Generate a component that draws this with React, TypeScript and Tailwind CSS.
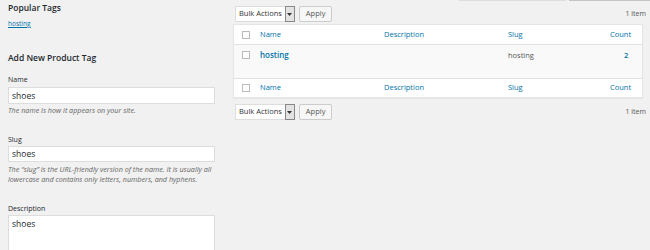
import React from 'react'

const font = { fontFamily: '"Open Sans", "Noto Sans", sans-serif' }

function BulkBar() {
  return (
    <div className="flex items-center justify-between h-[16px]">
      <div className="flex items-center gap-[4px] pl-[2px]">
        <div className="flex items-center h-[16px] bg-white border border-[#ddd] pl-[3px] text-[7.5px] text-[#333]">
          <span className="pr-[3px]">Bulk Actions</span>
          <span className="flex items-center justify-center w-[10px] h-[16px] border border-[#888] bg-[#e3e3e3] -mr-px">
            <svg width="5" height="3" viewBox="0 0 5 3">
              <path d="M0 0h5L2.5 3z" fill="#333" />
            </svg>
          </span>
        </div>
        <button className="h-[16px] px-[6px] border border-[#ccc] bg-[#f7f7f7] rounded-[2px] text-[7.5px] text-[#555] leading-none">
          Apply
        </button>
      </div>
      <span className="text-[7px] text-[#555] -mr-[3px]">1 item</span>
    </div>
  )
}

function Checkbox() {
  return <span className="block w-[8px] h-[8px] border border-[#bbb] bg-[#fdfdfd]" />
}

function HeadRow({ top }: { top?: boolean }) {
  return (
    <div
      className={`grid grid-cols-[26px_124px_124px_102px_1fr] items-center text-[7.5px] text-[#0073aa] bg-white ${
        top ? 'h-[20px] border-b border-[#e1e1e1]' : 'h-[19px] border-t border-[#e1e1e1]'
      }`}
    >
      <div className="pl-[8px]">
        <Checkbox />
      </div>
      <span>Name</span>
      <span>Description</span>
      <span>Slug</span>
      <span>Count</span>
    </div>
  )
}

export default function App() {
  return (
    <div className="w-[650px] h-[250px] overflow-hidden bg-[#f1f1f1] text-[#23282d]" style={font}>
      <div className="flex justify-end h-px">
        <div className="w-[107px] bg-[#ddd]" />
        <div className="w-[3px]" />
        <div className="w-[81px] bg-[#c4c4c4]" />
      </div>
      <div className="flex">
        {/* left column */}
        <div className="w-[225px] shrink-0 pl-[8px] pr-[10px]">
          <h2 className="text-[8.5px] font-semibold leading-[14px]">Popular Tags</h2>
          <a className="block mt-[4px] text-[6.5px] text-[#0073aa] underline leading-[10px]">hosting</a>
          <h2 className="text-[8.5px] font-semibold mt-[22px] leading-[14px]">Add New Product Tag</h2>

          <label className="block mt-[10px] text-[7px] leading-[10px]">Name</label>
          <div className="mt-[2px] h-[17px] bg-white border border-[#ddd] pl-[3px] text-[8.5px] leading-[15px]">shoes</div>
          <p className="mt-px text-[7.2px] italic text-[#666] leading-[10px] whitespace-nowrap">
            The name is how it appears on your site.
          </p>

          <label className="block mt-[20px] text-[7px] leading-[10px]">Slug</label>
          <div className="mt-px h-[16px] bg-white border border-[#ddd] pl-[3px] text-[8.5px] leading-[14px]">shoes</div>
          <p className="mt-[2px] text-[7.2px] italic text-[#666] leading-[10px] whitespace-nowrap">
            The “slug” is the URL-friendly version of the name. It is usually all
            <br />
            lowercase and contains only letters, numbers, and hyphens.
          </p>

          <label className="block mt-[20px] text-[7px] leading-[10px]">Description</label>
          <div className="mt-px h-[60px] bg-white border border-[#ddd] pl-[3px] pt-[2px] text-[8.5px] leading-[12px]">
            shoes
          </div>
        </div>

        {/* right column */}
        <div className="flex-1 pl-[8px] pr-[7px] pt-[5px]">
          <BulkBar />
          <div className="mt-[2px] border border-[#e5e5e5] shadow-[0_1px_1px_rgba(0,0,0,0.04)]">
            <HeadRow top />
            <div className="grid grid-cols-[26px_124px_124px_102px_1fr] items-start h-[33px] pt-[4px] bg-[#f9f9f9] text-[7.5px] leading-[12px]">
              <div className="pl-[8px] pt-[2px]">
                <Checkbox />
              </div>
              <span className="font-semibold text-[8px] text-[#0073aa]">hosting</span>
              <span />
              <span className="text-[#555]">hosting</span>
              <span className="text-[#0073aa] pl-[14px] font-semibold">2</span>
            </div>
            <HeadRow />
          </div>
          <div className="mt-[6px]">
            <BulkBar />
          </div>
        </div>
      </div>
    </div>
  )
}
